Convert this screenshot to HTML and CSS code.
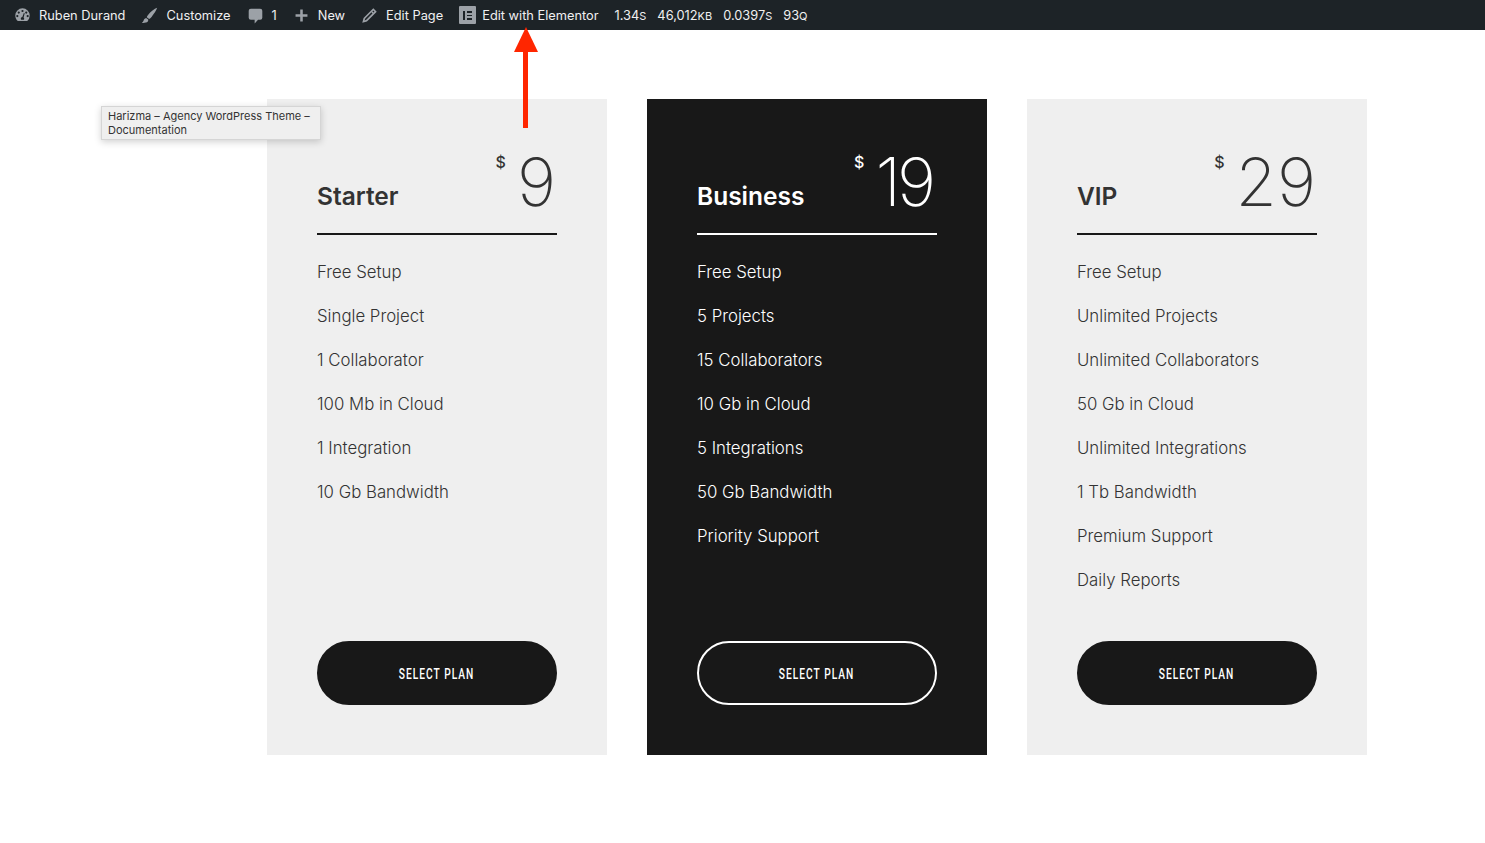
FILE: index.html
```html
<!DOCTYPE html>
<html lang="en">
<head>
    <meta charset="UTF-8">
    <meta name="viewport" content="width=device-width, initial-scale=1.0">
    <title>Pricing Plans</title>
    <link rel="stylesheet" href="styles.css">
</head>
<body>
    <div class="adminbar">
        <a class="bar-item">
            <svg class="bar-icon" viewBox="0 0 20 20"><path fill-rule="evenodd" d="M10 1.500a8.500 8.500 0 0 0-8.500 8.500c0 2.600 1.100 4.900 3 6.500h11A8.500 8.500 0 0 0 18.500 10 8.500 8.500 0 0 0 10 1.500zM10 3.400a1.300 1.300 0 1 1 0 2.600 1.300 1.300 0 0 1 0-2.600zM5.600 5.200a1.300 1.300 0 1 1 0 2.600 1.300 1.300 0 0 1 0-2.600zM14.400 5.200a1.300 1.300 0 1 1 0 2.600 1.300 1.300 0 0 1 0-2.600zM3.900 9.400a1.300 1.300 0 1 1 0 2.600 1.300 1.300 0 0 1 0-2.600zM16.100 9.400a1.300 1.300 0 1 1 0 2.600 1.300 1.300 0 0 1 0-2.600zM11.600 7l1 .4-1.300 4.900c.5.500.7 1 .7 1.600 0 .5-.2.900-.4 1.100H8.400c-.2-.2-.4-.6-.4-1.100 0-1.100.8-2 1.800-2z"/></svg>
            <span>Ruben Durand</span>
        </a>
        <a class="bar-item">
            <svg class="bar-icon" viewBox="0 0 20 20"><path d="M19 1c-3 1.200-8 4.800-10.500 8-.9 1.100-1.500 2.200-1.700 3l2.800 2.100c.9-.4 1.900-1.300 2.800-2.400C15 8.500 18.300 3.700 19 1zM6 12.800c-1.900.4-2.500 1.700-2.900 3.100-.3 1-1 1.900-2.100 2.800 2.500.3 5.900-.2 7-1.600.6-.9.600-1.700.4-2.400z"/></svg>
            <span>Customize</span>
        </a>
        <a class="bar-item">
            <svg class="bar-icon" viewBox="0 0 20 20"><path d="M4.500 2h11A2.500 2.500 0 0 1 18 4.500v8a2.500 2.500 0 0 1-2.500 2.500H13l-4 4.500V15H4.500A2.500 2.500 0 0 1 2 12.500v-8A2.500 2.500 0 0 1 4.500 2z"/></svg>
            <span>1</span>
        </a>
        <a class="bar-item">
            <svg class="bar-icon" viewBox="0 0 20 20"><path d="M8.500 3h3v5.500H17v3h-5.500V17h-3v-5.500H3v-3h5.500z"/></svg>
            <span>New</span>
        </a>
        <a class="bar-item">
            <svg class="bar-icon" viewBox="0 0 20 20"><path fill-rule="evenodd" d="M14.500 1.500l4 4L7 17l-5.500 1.500L3 13zM14.400 4.200l-1 1 1.400 1.400 1-1zM12.300 6.300L5 13.600 4.200 15.800l2-.8 7.300-7.300z"/></svg>
            <span>Edit Page</span>
        </a>
        <a class="bar-item elementor">
            <span class="el-logo"><i class="el-bar"></i><i class="el-lines"></i></span>
            <span>Edit with Elementor</span>
        </a>
        <div class="metrics">
            <span>1.34<small>S</small></span>
            <span>46,012<small>KB</small></span>
            <span>0.0397<small>S</small></span>
            <span>93<small>Q</small></span>
        </div>
    </div>

    <div class="arrow">
        <div class="arrow-head"></div>
        <div class="arrow-shaft"></div>
    </div>

    <div class="tooltip">Harizma – Agency WordPress Theme – Documentation</div>

    <main class="plans">
        <section class="plan">
            <header class="plan-head">
                <h2>Starter</h2>
                <div class="price"><sup>$</sup><span>9</span></div>
            </header>
            <ul class="features">
                <li>Free Setup</li>
                <li>Single Project</li>
                <li>1 Collaborator</li>
                <li>100 Mb in Cloud</li>
                <li>1 Integration</li>
                <li>10 Gb Bandwidth</li>
            </ul>
            <a class="btn"><span>SELECT PLAN</span></a>
        </section>

        <section class="plan plan-dark">
            <header class="plan-head">
                <h2>Business</h2>
                <div class="price"><sup>$</sup><span>19</span></div>
            </header>
            <ul class="features">
                <li>Free Setup</li>
                <li>5 Projects</li>
                <li>15 Collaborators</li>
                <li>10 Gb in Cloud</li>
                <li>5 Integrations</li>
                <li>50 Gb Bandwidth</li>
                <li>Priority Support</li>
            </ul>
            <a class="btn"><span>SELECT PLAN</span></a>
        </section>

        <section class="plan">
            <header class="plan-head">
                <h2>VIP</h2>
                <div class="price"><sup>$</sup><span>29</span></div>
            </header>
            <ul class="features">
                <li>Free Setup</li>
                <li>Unlimited Projects</li>
                <li>Unlimited Collaborators</li>
                <li>50 Gb in Cloud</li>
                <li>Unlimited Integrations</li>
                <li>1 Tb Bandwidth</li>
                <li>Premium Support</li>
                <li>Daily Reports</li>
            </ul>
            <a class="btn"><span>SELECT PLAN</span></a>
        </section>
    </main>
</body>
</html>
```

FILE: styles.css
```css
body {
    margin: 0;
    background-color: #fff;
    font-family: 'Inter', 'Liberation Sans', sans-serif;
    color: #333;
}

/* top bar */
.adminbar {
    display: flex;
    align-items: center;
    gap: 16px;
    height: 30px;
    padding-left: 14px;
    background-color: #1d2327;
    color: #f0f0f1;
    font-size: 12.8px;
    white-space: nowrap;
}

.bar-item {
    display: flex;
    align-items: center;
    gap: 8px;
}

.bar-icon {
    width: 17px;
    height: 17px;
    fill: #9ca1a7;
}

.elementor {
    gap: 6px;
}

.el-logo {
    display: flex;
    justify-content: center;
    gap: 2px;
    align-items: center;
    width: 17px;
    height: 18px;
    background-color: #9ca1a7;
    border-radius: 1px;
}

.el-bar {
    width: 2px;
    height: 9px;
    background-color: #1d2327;
}

.el-lines {
    width: 5px;
    height: 9px;
    background: repeating-linear-gradient(#1d2327 0, #1d2327 1.8px, transparent 1.8px, transparent 3.6px);
}

.metrics {
    display: flex;
    gap: 11px;
}

.metrics small {
    font-size: 11px;
}

/* red annotation */
.arrow {
    position: absolute;
    left: 513px;
    top: 27px;
    display: flex;
    flex-direction: column;
    align-items: center;
    width: 25px;
}

.arrow-head {
    width: 0;
    height: 0;
    border-left: 12.5px solid transparent;
    border-right: 12.5px solid transparent;
    border-bottom: 25px solid #ff2600;
}

.arrow-shaft {
    width: 5px;
    height: 76px;
    background-color: #ff2600;
}

.tooltip {
    position: absolute;
    left: 101px;
    top: 106px;
    z-index: 2;
    width: 206px;
    padding: 2px 6px;
    background-color: #efefef;
    border: 1px solid #d5d5d5;
    box-shadow: 0 2px 7px rgba(0, 0, 0, 0.18);
    font-size: 11px;
    line-height: 14px;
    color: #333;
}

/* pricing cards */
.plans {
    display: flex;
    gap: 40px;
    padding: 69px 0 88px 267px;
}

.plan {
    display: flex;
    flex-direction: column;
    box-sizing: border-box;
    width: 340px;
    height: 656px;
    padding: 0 50px 50px;
    background-color: #efefef;
    color: #333;
}

.plan-dark {
    background-color: #181818;
    color: #fff;
}

.plan-head {
    display: flex;
    justify-content: space-between;
    align-items: flex-end;
    height: 134px;
    border-bottom: 2px solid #181818;
}

.plan-dark .plan-head {
    border-bottom-color: #fff;
}

.plan-head h2 {
    margin: 0 0 20px;
    font-size: 24.5px;
    line-height: 34px;
    font-weight: 600;
}

.price {
    display: flex;
    align-items: flex-start;
    gap: 11px;
    margin-right: 1px;
    margin-bottom: 17px;
}

.price sup {
    margin-top: 5px;
    font-size: 16px;
    line-height: 18px;
    font-weight: 500;
}

.price span {
    font-size: 67px;
    line-height: 68px;
    font-weight: 200;
}

/* the 1 is wider here than in the design, pull the digits together */
.plan-dark .price {
    margin-right: 5px;
}

.plan-dark .price span {
    letter-spacing: -4px;
}

.features {
    list-style: none;
    margin: 15px 0 0;
    padding: 0;
}

.features li {
    height: 44px;
    font-size: 16.8px;
    line-height: 44px;
    font-weight: 300;
}

.btn {
    display: flex;
    justify-content: center;
    align-items: center;
    box-sizing: border-box;
    height: 64px;
    padding-top: 1px;
    margin-top: auto;
    background-color: #181818;
    border: 2px solid #181818;
    border-radius: 32px;
    color: #fff;
    font-family: 'Roboto', sans-serif;
    font-size: 15px;
    font-weight: 500;
    letter-spacing: 1.5px;
}

/* no condensed face installed, so squeeze the label */
.btn span {
    transform: scaleX(0.68);
    white-space: nowrap;
}

.plan-dark .btn {
    border-color: #fff;
}
```
